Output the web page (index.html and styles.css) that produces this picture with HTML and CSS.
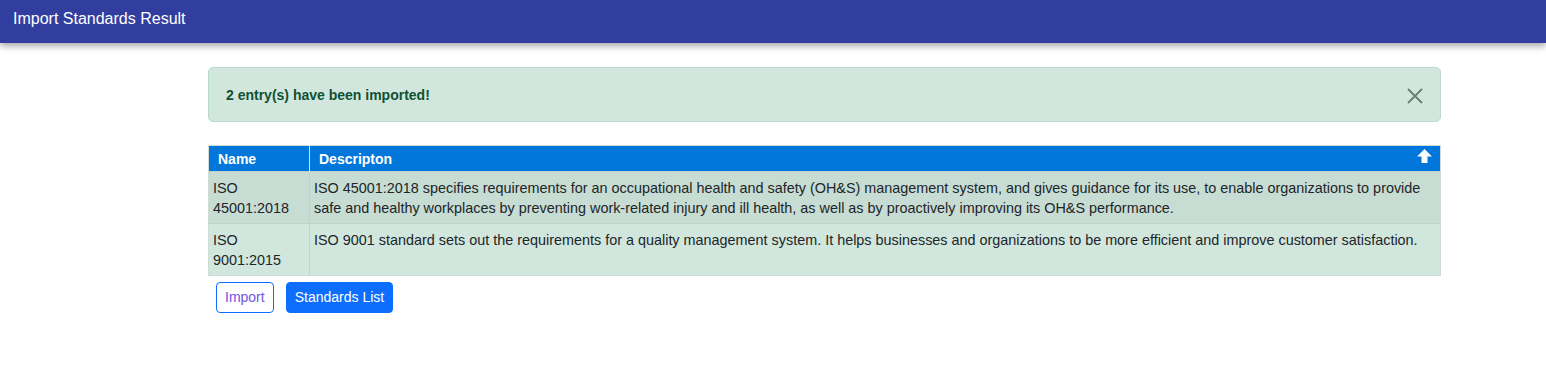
FILE: index.html
```html
<!DOCTYPE html>
<html>

	<head lang="en">
		<meta charset="UTF-8">
		<title>Import Standards Result</title>
		<link rel="stylesheet" href="styles.css">
	</head>

	<body>
		<div class="topbar">Import Standards Result</div>

		<div class="wrap">
			<div class="alert">
				<span>2 entry(s) have been imported!</span>
				<span class="close">
					<svg width="16" height="16" viewBox="0 0 16 16"><path d="M1 1L15 15M15 1L1 15" stroke="#6e7b75" stroke-width="1.8" fill="none"/></svg>
				</span>
			</div>

			<table class="grid">
				<thead>
					<tr>
						<th class="col-name">Name</th>
						<th class="col-desc">Descripton
							<svg class="sort" width="15" height="14" viewBox="0 0 15 14"><path d="M7.5 0L15 7.5H10.5V14H4.5V7.5H0Z" fill="#fff"/></svg>
						</th>
					</tr>
				</thead>
				<tbody>
					<tr class="odd">
						<td>ISO 45001:2018</td>
						<td>ISO 45001:2018 specifies requirements for an occupational health and safety (OH&amp;S) management system, and gives guidance for its use, to enable organizations to provide safe and healthy workplaces by preventing work-related injury and ill health, as well as by proactively improving its OH&amp;S performance.</td>
					</tr>
					<tr>
						<td>ISO 9001:2015</td>
						<td>ISO 9001 standard sets out the requirements for a quality management system. It helps businesses and organizations to be more efficient and improve customer satisfaction.</td>
					</tr>
				</tbody>
			</table>

			<div class="actions">
				<span class="btn btn-outline">Import</span>
				<span class="btn btn-primary">Standards List</span>
			</div>
		</div>
	</body>

</html>
```

FILE: styles.css
```css
body {
	margin: 0;
	font-family: "Liberation Sans", Arial, sans-serif;
	color: #212529;
	background: #fff;
}

.topbar {
	height: 43px;
	background: #313e9f;
	color: #fff;
	font-size: 16px;
	line-height: 37px;
	padding: 0 13px;
	box-shadow: 0 3px 7px rgba(0, 0, 0, .35);
}

.wrap {
	width: 1233px;
	margin: 24px 0 0 208px;
}

.alert {
	height: 53px;
	background: #d1e7dd;
	border: 1px solid #badbcc;
	border-radius: 5px;
	color: #0f5132;
	font-size: 14px;
	font-weight: bold;
	display: flex;
	align-items: center;
	justify-content: space-between;
	padding: 0 17px 0 17px;
}

.close {
	display: flex;
	margin-top: 2px;
}

.grid {
	width: 100%;
	margin-top: 23px;
	border-collapse: collapse;
	font-size: 14.4px;
	border: 1px solid #cfdcd6;
}

.grid th {
	background: #0277db;
	color: #fff;
	text-align: left;
	height: 25px;
	padding: 0 9px;
	font-size: 14px;
	font-weight: bold;
	position: relative;
}

.grid th.col-name {
	width: 82px;
	border-right: 1px solid #d7e3ef;
}

.sort {
	position: absolute;
	right: 8px;
	top: 3px;
}

.grid td {
	background: #d1e7dd;
	padding: 6px 4px 5px 4px;
	line-height: 20px;
	vertical-align: top;
	border-top: 1px solid #bfd3ca;
}

.grid td:first-child {
	border-right: 1px solid #bfd3ca;
}

.grid tr.odd td {
	background: #c7dcd3;
}

.actions {
	display: flex;
	gap: 12px;
	margin: 6px 0 0 8px;
}

.btn {
	display: inline-block;
	height: 31px;
	line-height: 29px;
	box-sizing: border-box;
	border-radius: 4px;
	font-size: 14px;
	padding: 0 8px;
	border: 1px solid #0d6efd;
	cursor: pointer;
}

.btn-outline {
	color: #7353e0;
	background: #fff;
}

.btn-primary {
	background: #0d6efd;
	color: #fff;
}
```
